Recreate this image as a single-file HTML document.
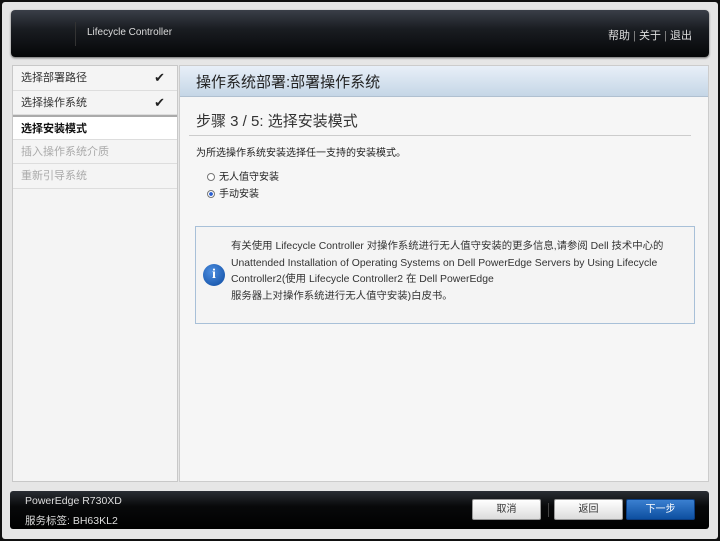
<!DOCTYPE html><html><head><meta charset="utf-8"><style>
*{margin:0;padding:0;box-sizing:border-box}
body{width:720px;height:541px;background:#111;position:relative;overflow:hidden;font-family:"Liberation Sans","Noto Sans CJK SC",sans-serif}
.frame{position:absolute;left:2px;top:2px;width:716px;height:537px;background:#e6e6e6;border-radius:3px}
.hdr{position:absolute;left:11px;top:10px;width:698px;height:47px;border-radius:4px;background:linear-gradient(#3a3f48,#1a1d22 40%,#050607);box-shadow:0 1px 2px #666}
.hdr .sep{position:absolute;left:64px;top:12px;width:1px;height:24px;background:#333}
.hdr .t{position:absolute;left:76px;top:17px;color:#ddd;font-size:10px}
.hdr .r{position:absolute;right:17px;top:17px;color:#ddd;font-size:11px}
.nav{position:absolute;left:12px;top:65px;width:166px;height:417px;background:#f4f4f4;border:1px solid #c8c8c8}
.nav div{height:24.5px;line-height:24px;padding-left:8px;font-size:11px;color:#333;border-bottom:1px solid #ddd;position:relative}
.nav .ck{position:absolute;right:12px;top:0;font-size:13px;color:#222}
.nav .sel{background:#fff;font-weight:bold;color:#111;border-top:2px solid #aaa}
.nav .dis{color:#aaa}
.main{position:absolute;left:179px;top:65px;width:530px;height:417px;background:#f6f6f6;border:1px solid #ccc}
.tb{height:31px;background:linear-gradient(#e8eff8,#c5d6e6);border-bottom:1px solid #b0c0d0;font-size:15px;line-height:34px;padding-left:16px;color:#222}
.h2{position:absolute;left:16px;top:44px;font-size:15px;color:#333}
.ln{position:absolute;left:9px;top:69px;width:502px;height:1px;background:#ccc}
.d{position:absolute;left:16px;top:78px;font-size:10px;color:#222}
.rd{position:absolute;left:27px;font-size:10px;color:#222}
.rd i{display:inline-block;width:8px;height:8px;border:1px solid #777;border-radius:50%;margin-right:4px;vertical-align:-1px;background:#fff}
.rd i.on{background:radial-gradient(#2a5fd0 40%,#fff 50%)}
.info{position:absolute;left:15px;top:160px;width:500px;height:98px;border:1px solid #a8c0d8;background:#f4f4f4}
.info .ic{position:absolute;left:7px;top:37px;width:22px;height:22px;border-radius:50%;background:radial-gradient(circle at 40% 35%,#4d8ee0,#0c4aa0);color:#fff;font:bold 14px/22px "Liberation Serif",serif;text-align:center}
.info p{position:absolute;left:35px;top:12px;font-size:10.4px;line-height:16.5px;color:#333;white-space:nowrap}
.ft{position:absolute;left:10px;top:491px;width:699px;height:38px;border-radius:3px;background:linear-gradient(#2a2e34,#08090a 40%,#000)}
.ft .a{position:absolute;left:15px;top:4px;color:#ddd;font-size:10.5px}
.ft .b{position:absolute;left:15px;top:22px;color:#ddd;font-size:10.5px}
.btn{position:absolute;top:8px;width:69px;height:21px;border-radius:2px;background:linear-gradient(#fff,#dcdcdc);border:1px solid #999;font-size:10px;text-align:center;line-height:19px;color:#333}
.blue{background:linear-gradient(#3a7fd0,#0d4fa0);color:#fff;border-color:#0a3c80}
</style></head><body>
<div class="frame"></div>
<div class="hdr"><div class="sep"></div><div class="t">Lifecycle Controller</div><div class="r">帮助 <span style="color:#888">|</span> 关于 <span style="color:#888">|</span> 退出</div></div>
<div class="nav">
<div>选择部署路径<span class="ck">✔</span></div>
<div>选择操作系统<span class="ck">✔</span></div>
<div class="sel">选择安装模式</div>
<div class="dis">插入操作系统介质</div>
<div class="dis">重新引导系统</div>
</div>
<div class="main">
<div class="tb">操作系统部署:部署操作系统</div>
<div class="h2">步骤 3 / 5: 选择安装模式</div>
<div class="ln"></div>
<div class="d">为所选操作系统安装选择任一支持的安装模式。</div>
<div class="rd" style="top:102px"><i></i>无人值守安装</div>
<div class="rd" style="top:119px"><i class="on"></i>手动安装</div>
<div class="info"><div class="ic">i</div><p>有关使用 Lifecycle Controller 对操作系统进行无人值守安装的更多信息,请参阅 Dell 技术中心的<br>Unattended Installation of Operating Systems on Dell PowerEdge Servers by Using Lifecycle<br>Controller2(使用 Lifecycle Controller2 在 Dell PowerEdge<br>服务器上对操作系统进行无人值守安装)白皮书。</p></div>
</div>
<div class="ft"><div class="a">PowerEdge R730XD</div><div class="b">服务标签: BH63KL2</div>
<div class="btn" style="left:462px">取消</div>
<div style="position:absolute;left:538px;top:12px;width:1px;height:14px;background:#444"></div>
<div class="btn" style="left:544px">返回</div>
<div class="btn blue" style="left:616px">下一步</div></div>
</body></html>
